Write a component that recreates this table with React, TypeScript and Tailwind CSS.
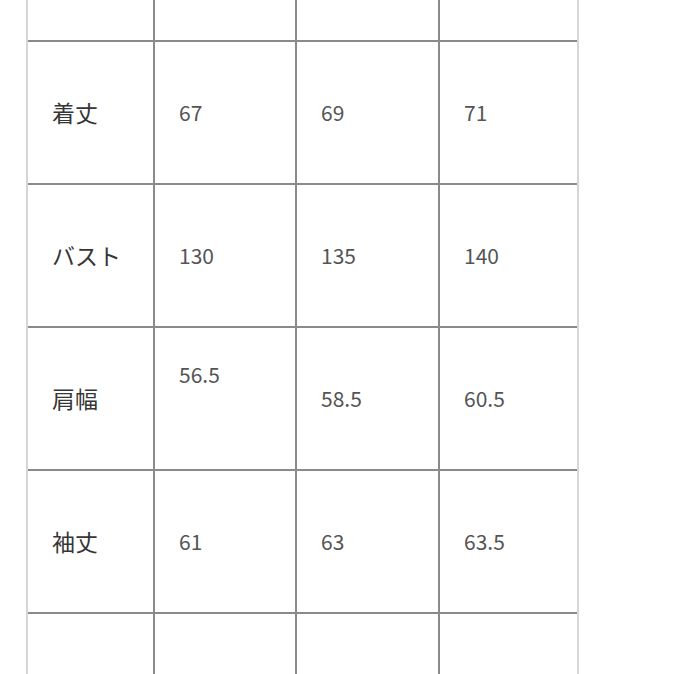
const rows = [
  { label: '', values: ['', '', ''], top: true },
  { label: '着丈', values: ['67', '69', '71'] },
  { label: 'バスト', values: ['130', '135', '140'] },
  { label: '肩幅', values: ['56.5', '58.5', '60.5'], raiseFirst: true },
  { label: '袖丈', values: ['61', '63', '63.5'] },
  { label: '裄丈', values: ['84', '86', '88'] },
]

const widths = ['w-[142px]', 'w-[143px]', 'w-[139px]']

export default function App() {
  return (
    <div className="h-[674px] w-[674px] overflow-hidden bg-white font-['Noto_Sans_CJK_JP','Noto_Sans',sans-serif]">
      <div className="ml-[26px] w-[553px] border-l-2 border-r-2 border-[#d6d6d6]">
        {rows.map((row, i) => (
          <div
            key={i}
            className={`flex border-b-2 border-[#8a8a8a] ${row.top ? 'h-[42px]' : 'h-[143px]'}`}
          >
            <div className="flex w-[125px] items-center pl-6 text-[23px] text-[#363636]">
              {row.label}
            </div>
            {row.values.map((v, j) => (
              <div
                key={j}
                className={`flex items-center border-l-2 border-[#8a8a8a] pl-6 text-[21px] text-[#555555] ${widths[j]} ${row.raiseFirst && j === 0 ? 'pb-12' : ''}`}
              >
                {v}
              </div>
            ))}
          </div>
        ))}
      </div>
    </div>
  )
}
